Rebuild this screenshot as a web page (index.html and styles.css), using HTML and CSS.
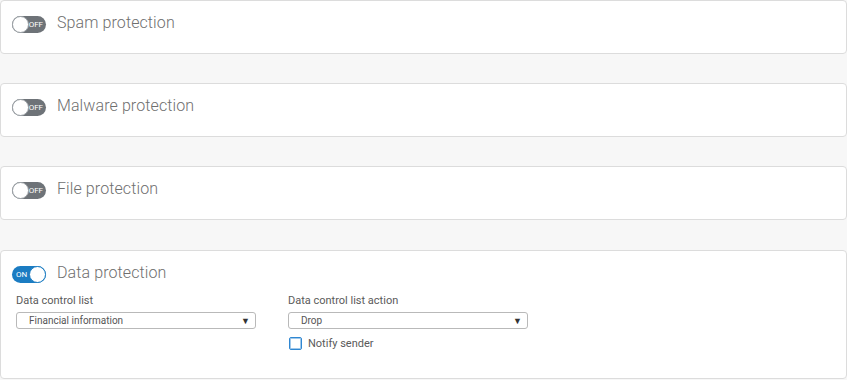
FILE: index.html
```html
<!DOCTYPE html>
<html lang="en">
<head>
    <meta charset="UTF-8">
    <title>Protection settings</title>
    <link rel="stylesheet" href="styles.css">
</head>
<body>
    <div class="card">
        <div class="card-head">
            <span class="toggle"><span class="toggle-text">OFF</span><span class="knob"></span></span>
            <span class="title">Spam protection</span>
        </div>
    </div>

    <div class="card">
        <div class="card-head">
            <span class="toggle"><span class="toggle-text">OFF</span><span class="knob"></span></span>
            <span class="title">Malware protection</span>
        </div>
    </div>

    <div class="card card-last-closed">
        <div class="card-head">
            <span class="toggle"><span class="toggle-text">OFF</span><span class="knob"></span></span>
            <span class="title">File protection</span>
        </div>
    </div>

    <div class="card card-open">
        <div class="card-head">
            <span class="toggle on"><span class="toggle-text">ON</span><span class="knob"></span></span>
            <span class="title">Data protection</span>
        </div>
        <div class="fields">
            <div class="field">
                <label class="label">Data control list</label>
                <div class="select"><span>Financial information</span><span class="arrow">&#9660;</span></div>
            </div>
            <div class="field">
                <label class="label">Data control list action</label>
                <div class="select"><span>Drop</span><span class="arrow">&#9660;</span></div>
                <div class="check-row">
                    <span class="checkbox"></span>
                    <span class="check-label">Notify sender</span>
                </div>
            </div>
        </div>
    </div>
</body>
</html>
```

FILE: styles.css
```css
* {
    margin: 0;
    padding: 0;
    box-sizing: border-box;
}

body {
    font-family: Roboto, 'Liberation Sans', sans-serif;
    background: #f7f7f7;
    color: #555;
    width: 847px;
}

.card {
    background: #fff;
    border: 1px solid #dcdcdc;
    border-radius: 4px;
    padding: 13px 11px 19px 11px;
    margin-bottom: 29px;
}

.card-last-closed {
    margin-bottom: 30px;
}

.card-open {
    padding-bottom: 28px;
    margin-bottom: 0;
}

.card-head {
    display: flex;
    align-items: center;
    height: 20px;
}

.title {
    font-size: 16px;
    font-weight: 300;
    color: #6f6f6f;
    margin-left: 11px;
    margin-top: -3px;
    letter-spacing: 0.1px;
}

.toggle {
    position: relative;
    width: 34px;
    height: 17px;
    border-radius: 9px;
    background: #6e7378;
    display: inline-block;
}

.toggle .knob {
    position: absolute;
    top: 0;
    left: 0;
    width: 17px;
    height: 17px;
    border-radius: 50%;
    background: #fff;
    border: 1px solid #9aa0a5;
}

.toggle-text {
    position: absolute;
    right: 3px;
    top: 4px;
    font-size: 8px;
    line-height: 9px;
    color: #fff;
}

.toggle.on {
    background: #1b7cc2;
}

.toggle.on .knob {
    left: auto;
    right: 0;
    border-color: #1b7cc2;
}

.toggle.on .toggle-text {
    right: auto;
    left: 4px;
}

.fields {
    display: flex;
    gap: 32px;
    padding-left: 4px;
    margin-top: 10px;
}

.field {
    width: 240px;
}

.label {
    display: block;
    font-size: 11px;
    line-height: 14px;
    color: #5a5a5a;
    margin-bottom: 4px;
}

.select {
    display: flex;
    justify-content: space-between;
    align-items: center;
    height: 17px;
    border: 1px solid #b9b9b9;
    border-radius: 3px;
    padding: 0 5px 0 12px;
    font-size: 10px;
    color: #555;
}

.arrow {
    font-size: 9px;
    color: #333;
}

.check-row {
    display: flex;
    align-items: center;
    margin-top: 8px;
}

.checkbox {
    width: 13px;
    height: 13px;
    border: 1px solid #2f87d2;
    box-shadow: inset 0 0 0 1px rgba(47, 135, 210, 0.45);
    border-radius: 2px;
    margin-left: 1px;
}

.check-label {
    font-size: 11px;
    color: #5a5a5a;
    margin-left: 6px;
}
```
